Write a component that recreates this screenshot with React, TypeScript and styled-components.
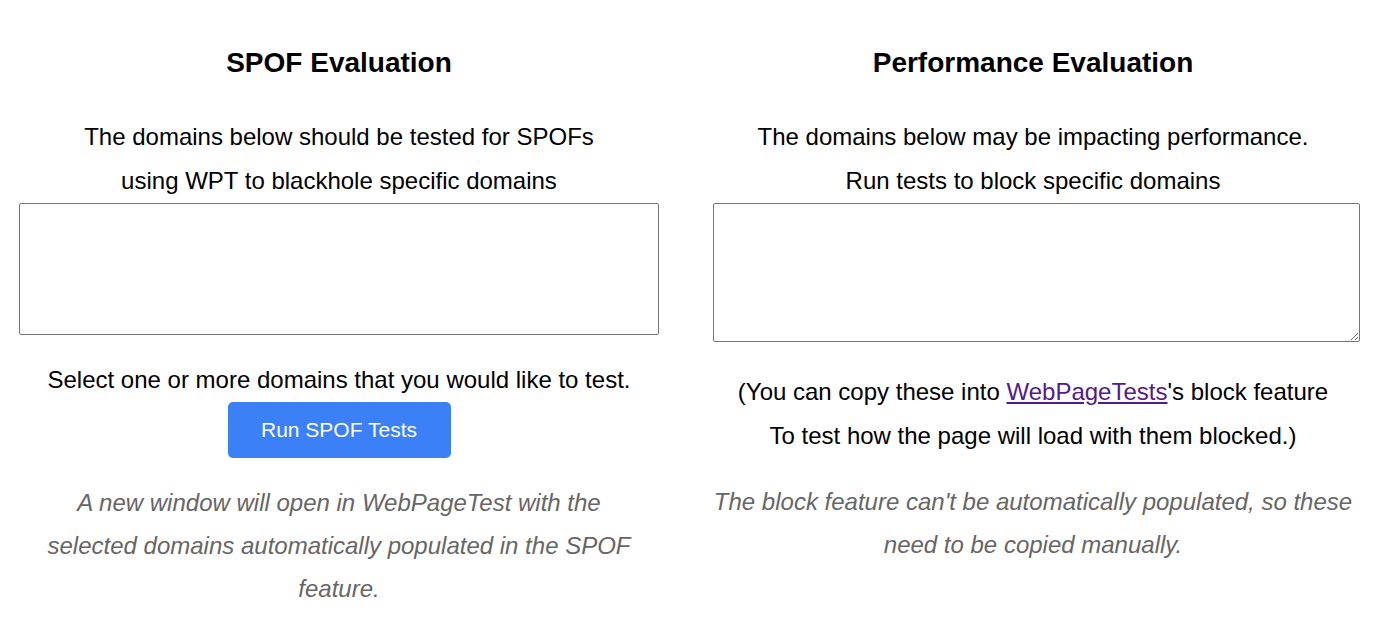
import React from "react";
import styled, { createGlobalStyle } from "styled-components";

const Global = createGlobalStyle`
  html, body { margin: 0; padding: 0; background: #fff; }
  body { font-family: "Liberation Sans", Arial, Helvetica, sans-serif; color: #000; }
`;

const Page = styled.div`
  display: grid;
  grid-template-columns: 640px 640px;
  column-gap: 54px;
  padding: 36px 22px 0 19px;
  align-items: start;
`;

const Column = styled.section`
  display: flex;
  flex-direction: column;
  align-items: center;
  text-align: center;
`;

const Heading = styled.h2`
  margin: 0 0 25px;
  font-size: 28px;
  line-height: 54px;
  font-weight: bold;
`;

const Line = styled.p`
  margin: 0;
  font-size: 24px;
  line-height: 44px;
  white-space: nowrap;
`;

const Area = styled.textarea<{ $w: number; $h: number; $resize?: boolean }>`
  box-sizing: border-box;
  align-self: flex-start;
  width: ${(p) => p.$w}px;
  height: ${(p) => p.$h}px;
  margin: 0;
  border: 1px solid #767676;
  border-radius: 2px;
  resize: ${(p) => (p.$resize ? "both" : "none")};
  font-family: inherit;
  font-size: 16px;
  background: #fff;
  padding: 2px;
`;

const Gap = styled.div<{ $h: number }>`
  height: ${(p) => p.$h}px;
`;

const Button = styled.button`
  width: 223px;
  height: 56px;
  border: none;
  border-radius: 5px;
  background: #3b80f6;
  color: #fff;
  font-family: inherit;
  font-size: 21px;
  cursor: pointer;
`;

const Note = styled.p<{ $w: number }>`
  margin: 0;
  max-width: ${(p) => p.$w}px;
  font-size: 24px;
  line-height: 43px;
  font-style: italic;
  color: #666;
`;

const Link = styled.a`
  color: #551a8b;
  text-decoration: underline;
`;

export default function App() {
  return (
    <>
      <Global />
      <Page>
        <Column>
          <Heading>SPOF Evaluation</Heading>
          <Line>The domains below should be tested for SPOFs</Line>
          <Line>using WPT to blackhole specific domains</Line>
          <Area $w={640} $h={132} />
          <Gap $h={23} />
          <Line>Select one or more domains that you would like to test.</Line>
          <Button>Run SPOF Tests</Button>
          <Gap $h={23} />
          <Note $w={600}>
            A new window will open in WebPageTest with the selected domains automatically populated in the SPOF
            feature.
          </Note>
        </Column>
        <Column>
          <Heading>Performance Evaluation</Heading>
          <Line>The domains below may be impacting performance.</Line>
          <Line>Run tests to block specific domains</Line>
          <Area $w={647} $h={139} $resize />
          <Gap $h={28} />
          <Line>
            (You can copy these into <Link href="#">WebPageTests</Link>'s block feature
          </Line>
          <Line>To test how the page will load with them blocked.)</Line>
          <Gap $h={22} />
          <Note $w={640}>
            The block feature can't be automatically populated, so these need to be copied manually.
          </Note>
        </Column>
      </Page>
    </>
  );
}
